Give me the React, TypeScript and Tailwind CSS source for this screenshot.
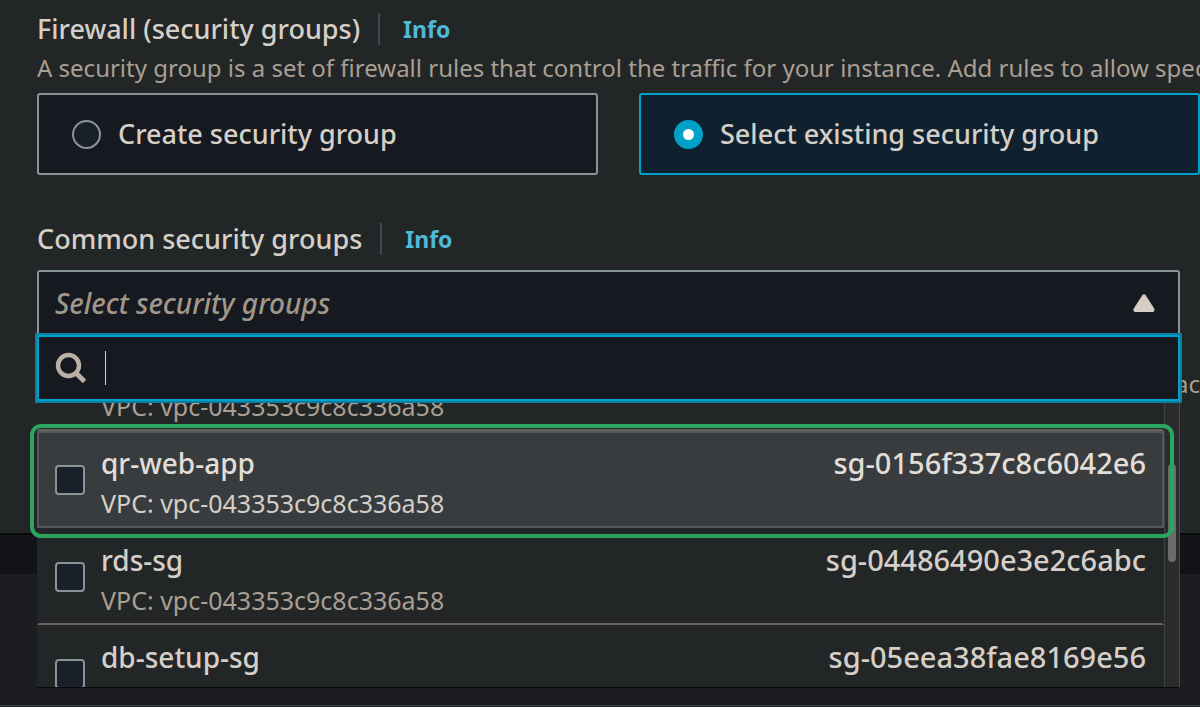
import { useState } from 'react';

const VPC = 'vpc-043353c9c8c336a58';

const groups = [
  { name: 'default', id: 'sg-0a1c6e5d4f3b2a190' },
  { name: 'qr-web-app', id: 'sg-0156f337c8c6042e6' },
  { name: 'rds-sg', id: 'sg-04486490e3e2c6abc' },
  { name: 'db-setup-sg', id: 'sg-05eea38fae8169e56' },
];

const modes = [
  { value: 'create', label: 'Create security group' },
  { value: 'existing', label: 'Select existing security group' },
];

function FieldTitle({ children }: { children: string }) {
  return (
    <div className="flex h-9 items-center">
      <h2 className="text-[27px] font-medium leading-9 whitespace-nowrap">{children}</h2>
      <span className="ml-[18px] h-8 w-0.5 bg-[#414750]" />
      <a href="#info" className="ml-[23px] text-[23px] font-bold leading-9 text-[#4fb9d8]">
        Info
      </a>
    </div>
  );
}

export default function App() {
  const [mode, setMode] = useState('existing');
  const [query, setQuery] = useState('');
  const [picked, setPicked] = useState<string[]>([]);
  const active = 'qr-web-app';

  const toggle = (name: string) =>
    setPicked((p) => (p.includes(name) ? p.filter((n) => n !== name) : [...p, name]));

  return (
    <div className="h-screen overflow-hidden bg-[#1b1d23] font-['Noto_Sans',sans-serif] text-[#d5cfc7]">
      <section className="border-b-2 border-[#08090a] bg-[#232627] pt-[11px] pb-[131px] pl-[37px]">
        <FieldTitle>Firewall (security groups)</FieldTitle>
        <p className="mt-[3px] overflow-hidden text-2xl leading-9 whitespace-nowrap text-[#a99f93]">
          A security group is a set of firewall rules that control the traffic for your instance. Add rules to allow specific traffic
        </p>

        {/* Radio tiles */}
        <div className="mt-[7px] grid grid-cols-2 gap-[41px]">
          {modes.map((m) => (
            <label
              key={m.value}
              className={`flex h-[82px] items-center gap-[17px] rounded-[3px] border-2 pl-[33px] text-[27px] font-medium ${
                mode === m.value ? 'border-[#00a1c9] bg-[#0f212e]' : 'border-[#879596] bg-[#16191f]'
              }`}
            >
              <input
                type="radio"
                name="mode"
                checked={mode === m.value}
                onChange={() => setMode(m.value)}
                className="size-[29px] shrink-0 appearance-none rounded-full border-2 border-[#879596] bg-[#1a2029] checked:border-[9px] checked:border-[#00a1c9] checked:bg-white"
              />
              <span className="whitespace-nowrap">{m.label}</span>
            </label>
          ))}
        </div>

        <div className="mt-[46px]">
          <FieldTitle>Common security groups</FieldTitle>
        </div>

        {/* Dropdown */}
        <div className="relative mt-[13px] mr-5">
          <button
            type="button"
            className="flex h-[66px] w-full items-center justify-between rounded-t-[3px] border-2 border-[#879596] bg-[#16191f] pr-[23px] pl-4 text-[28px] font-medium text-[#a0968a] italic"
          >
            Select security groups
            <svg width="22" height="18" viewBox="0 0 22 18" fill="#d5cfc7">
              <path d="M9.3 1.2Q11 -.7 12.7 1.2L21.2 14.6Q22.2 17.7 19.7 18H2.3Q-.2 17.7.8 14.6Z" />
            </svg>
          </button>

          <div className="absolute inset-x-0 top-[65px] z-10">
            <div className="flex h-[66px] items-center border-2 border-[#00a1c9] bg-[#16191f] pl-4 outline-2 outline-[#087fa3]">
              <svg width="32" height="32" viewBox="0 0 32 32" fill="none" stroke="#b9b0a6">
                <circle cx="13.5" cy="13.5" r="10.5" strokeWidth="4.4" />
                <path d="M21 21L29.5 29.5" strokeWidth="5" />
              </svg>
              <span className="ml-[18px] h-[34px] w-px bg-[#d5cfc7]" />
              <input
                type="text"
                aria-label="Filter security groups"
                value={query}
                onChange={(e) => setQuery(e.target.value)}
                className="h-full flex-1 bg-transparent text-[27px] outline-none"
              />
            </div>

            <div className="flex h-[287px] overflow-hidden border-r border-b border-[#4a4b4b] border-b-[#08090a] bg-[#232627]">
              <ul className="-mt-[67px] flex-1">
                {groups.map((g) => {
                  const isActive = g.name === active;
                  return (
                    <li key={g.name}>
                      <label
                        className={`flex h-[97px] items-center border-2 px-4 ${
                          isActive
                            ? 'border-[#53585b] bg-[#383c3f] text-[#e3ded8]'
                            : 'border-transparent border-b-[#68625a]'
                        }`}
                      >
                        <input
                          type="checkbox"
                          checked={picked.includes(g.name)}
                          onChange={() => toggle(g.name)}
                          className="size-[30px] shrink-0 appearance-none rounded-[4px] border-2 border-[#879596] bg-[#1a2029] checked:bg-[#00a1c9]"
                        />
                        <span className="ml-4 flex-1 pt-1">
                          <span className="flex justify-between font-medium">
                            <span className="text-[28px] leading-10">{g.name}</span>
                            <span className="text-[29px] leading-10">{g.id}</span>
                          </span>
                          <span
                            className={`mt-0.5 block text-[25px] leading-9 ${isActive ? 'text-[#d5cfc7]' : 'text-[#a99f93]'}`}
                          >
                            VPC: {VPC}
                          </span>
                        </span>
                      </label>
                    </li>
                  );
                })}
              </ul>
              <div className="w-[15px] border-l border-[#414242] bg-[#2c2b2c] px-[3px] pt-[63px]">
                <div className="h-[98px] w-2 rounded-full bg-[#6b6b6b]" />
              </div>
            </div>

            {/* Callout around the active option */}
            <div className="pointer-events-none absolute top-[89px] right-[6px] -left-[7px] h-[114px] rounded-[11px] border-4 border-[#2ba65d]" />
          </div>
        </div>

        <p className="mt-[30px] overflow-hidden text-right text-2xl leading-9 text-[#a99f93]">ac</p>
      </section>
      <div className="h-[39px] bg-[#121318]" />
      <div className="h-[132px] border-b border-[#39424a]" />
    </div>
  );
}
